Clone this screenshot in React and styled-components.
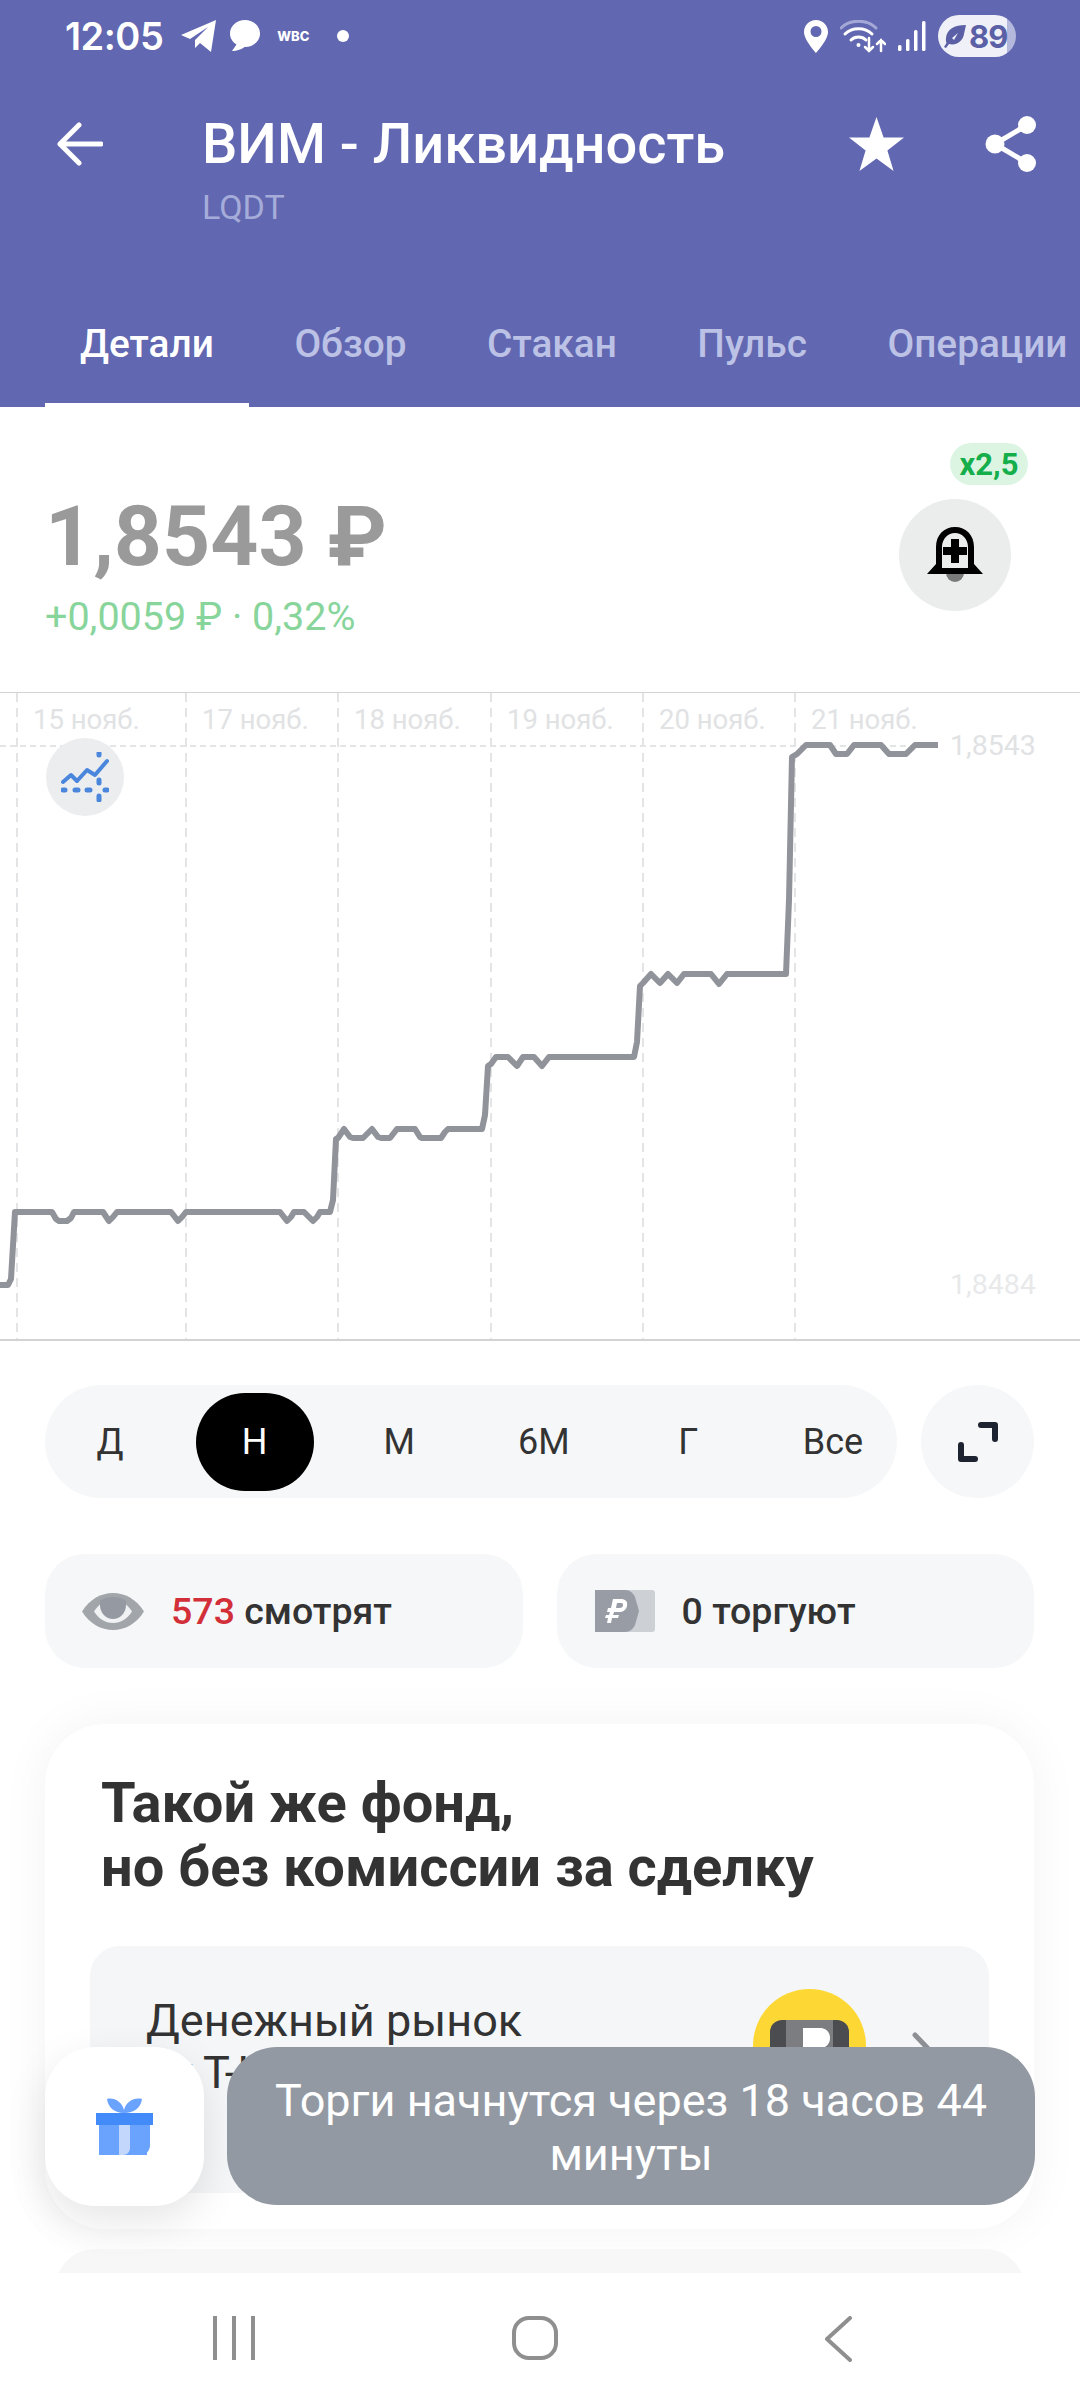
import React from 'react';
import styled, { createGlobalStyle } from 'styled-components';

const GlobalStyle = createGlobalStyle`
  html, body {
    margin: 0;
    padding: 0;
    background: #fff;
  }
  * {
    box-sizing: border-box;
  }
`;

const Page = styled.div`
  position: relative;
  width: 1080px;
  height: 2408px;
  overflow: hidden;
  background: #fff;
  font-family: Roboto, 'Noto Sans', sans-serif;
`;

// HEADER
const Header = styled.header`
  height: 407px;
  background: #6167b0;
  color: #fff;
`;

const StatusBar = styled.div`
  height: 72px;
  display: flex;
  align-items: center;
  padding: 0 64px 0 65px;
`;

const Time = styled.span`
  font-family: Inter, Roboto, sans-serif;
  font-size: 38px;
  font-weight: 600;
  letter-spacing: -0.5px;
  margin-right: 18px;
`;

const Wbc = styled.span`
  font-family: Inter, Roboto, sans-serif;
  font-size: 13px;
  font-weight: 800;
  margin: 0 28px 0 17px;
`;

const StatusRight = styled.div`
  margin-left: auto;
  display: flex;
  align-items: center;
  gap: 12px;
`;

const Battery = styled.div`
  width: 78px;
  height: 42px;
  border-radius: 21px;
  background: linear-gradient(90deg, #f0f1f8 88%, #b4b8dc 88%);
  display: flex;
  align-items: center;
  padding-left: 6px;
  gap: 3px;
  color: #5a5fa6;
  font-family: Inter, Roboto, sans-serif;
  font-size: 31px;
  font-weight: 700;
  letter-spacing: -1px;
`;

const TitleRow = styled.div`
  height: 207px;
  display: flex;
  align-items: flex-start;
  padding: 40px 43px 0 57px;
`;

const IconSlot = styled.div`
  height: 64px;
  display: flex;
  align-items: center;
  margin-left: ${(p) => p.$gap || 0}px;
`;

const TitleBlock = styled.div`
  margin-left: 99px;
  margin-right: auto;
`;

const Title = styled.h1`
  margin: 0;
  font-size: 56px;
  line-height: 64px;
  font-weight: 500;
  white-space: nowrap;
`;

const Ticker = styled.div`
  margin-top: 11px;
  font-size: 34px;
  line-height: 40px;
  color: #a6acd9;
`;

const Tabs = styled.nav`
  height: 128px;
  display: flex;
  gap: 10.5px;
  padding-left: 45px;
  overflow: hidden;
`;

const Tab = styled.div`
  flex: none;
  display: flex;
  align-items: center;
  padding: 4px 35px 0;
  font-size: 38.8px;
  font-weight: 500;
  white-space: nowrap;
  color: ${(p) => (p.$active ? '#fff' : '#bcc1e6')};
  border-bottom: 4px solid ${(p) => (p.$active ? '#fff' : 'transparent')};
`;

// QUOTE
const Quote = styled.section`
  height: 285px;
  display: flex;
  justify-content: space-between;
  padding: 36px 52px 0 45px;
`;

const QuoteLeft = styled.div`
  padding-top: 46px;
`;

const Price = styled.div`
  font-size: 84px;
  line-height: 96px;
  font-weight: 700;
  color: #9a9a9a;
`;

const Change = styled.div`
  margin-top: 10px;
  font-size: 39.5px;
  line-height: 44px;
  color: #88d59c;
`;

const QuoteRight = styled.div`
  width: 129px;
  display: flex;
  flex-direction: column;
  align-items: flex-start;
  gap: 14px;
`;

const Badge = styled.div`
  align-self: flex-end;
  width: 78px;
  height: 42px;
  border-radius: 21px;
  background: #dcf5e3;
  color: #14ae4a;
  font-size: 31px;
  font-weight: 700;
  display: flex;
  align-items: center;
  justify-content: center;
`;

const RoundButton = styled.div`
  width: ${(p) => p.$size}px;
  height: ${(p) => p.$size}px;
  flex: none;
  border-radius: 50%;
  background: ${(p) => p.$bg};
  display: flex;
  align-items: center;
  justify-content: center;
`;

// CHART
const ChartBox = styled.div`
  position: relative;
  height: 649px;

  svg.plot {
    display: block;
    width: 1080px;
    height: 649px;
  }
`;

const ChartBadge = styled.div`
  position: absolute;
  left: 46px;
  top: 46px;
`;

// PERIODS
const Periods = styled.div`
  display: flex;
  gap: 24px;
  margin: 44px 46px 0 45px;
`;

const PeriodPill = styled.div`
  flex: 1;
  height: 113px;
  border-radius: 57px;
  background: #f6f7f8;
  display: flex;
  align-items: center;
  justify-content: space-between;
  padding: 0 5px 0 6px;
`;

const Period = styled.div`
  width: 118px;
  height: 98px;
  border-radius: 49px;
  display: flex;
  align-items: center;
  justify-content: center;
  font-size: 36px;
  color: ${(p) => (p.$active ? '#fff' : '#333')};
  background: ${(p) => (p.$active ? '#000' : 'transparent')};
`;

// STATS
const Stats = styled.div`
  display: grid;
  grid-template-columns: 1fr 1fr;
  gap: 34px;
  margin: 56px 46px 0 45px;
`;

const Stat = styled.div`
  height: 114px;
  border-radius: 40px;
  background: #f6f7f8;
  display: flex;
  align-items: center;
  gap: ${(p) => p.$gap}px;
  padding-left: ${(p) => p.$left}px;
  font-size: 37.5px;
  font-weight: 500;
  color: #333;
  white-space: nowrap;
`;

const Red = styled.span`
  color: #d22f38;
`;

// FUND CARD
const Card = styled.section`
  margin: 56px 46px 0 45px;
  padding: 47px 45px 36px;
  border-radius: 60px;
  background: #fff;
  box-shadow: 0 0 50px rgba(30, 40, 60, 0.05);
`;

const CardTitle = styled.h2`
  margin: 0 0 47px 11px;
  font-size: 56px;
  line-height: 64px;
  font-weight: 700;
  color: #333;
  white-space: nowrap;
`;

const FundRow = styled.div`
  height: 247px;
  border-radius: 30px;
  background: #f5f6f8;
  display: flex;
  padding: 43px 47px 0 56px;
`;

const FundName = styled.div`
  margin-top: 6px;
  font-size: 45px;
  line-height: 52px;
  color: #333;
  margin-right: auto;
  white-space: nowrap;
`;

const FundLogo = styled.div`
  width: 113px;
  height: 113px;
  border-radius: 50%;
  background: #fdd835;
  display: flex;
  justify-content: center;
  padding-top: 31px;
`;

const PeekCard = styled.div`
  margin: 20px 55px 0;
  height: 120px;
  border-radius: 40px 40px 0 0;
  background: #f7f7f8;
`;

// FLOATING
const GiftButton = styled.div`
  position: absolute;
  left: 45px;
  top: 2047px;
  width: 159px;
  height: 159px;
  border-radius: 50px;
  background: #fff;
  box-shadow: 0 14px 40px rgba(0, 0, 0, 0.1);
  display: flex;
  align-items: center;
  justify-content: center;
`;

const Toast = styled.div`
  position: absolute;
  left: 227px;
  top: 2047px;
  width: 808px;
  height: 158px;
  border-radius: 50px;
  background: #9399a2;
  color: #fff;
  font-size: 45px;
  line-height: 54px;
  text-align: center;
  padding: 27px 40px 0;
`;

const BottomNav = styled.div`
  position: absolute;
  left: 0;
  right: 0;
  bottom: 0;
  height: 135px;
  background: #fff;
  display: flex;
  align-items: flex-start;
  justify-content: space-between;
  padding: 43px 228px 0 213px;
`;

const HomeSlot = styled.div`
  margin-right: 9px;
`;

const dayLines = [17, 186, 338, 491, 643, 795];
const dayLabels = [
  [33, '15 нояб.'],
  [202, '17 нояб.'],
  [354, '18 нояб.'],
  [507, '19 нояб.'],
  [659, '20 нояб.'],
  [811, '21 нояб.'],
];

const pricePoints = [
  [0, 1285], [8, 1285], [11, 1279], [15, 1212], [52, 1212], [56, 1219], [59, 1221], [67, 1221], [71, 1218],
  [74, 1212], [103, 1212], [109, 1221], [113, 1217], [117, 1212], [171, 1212], [178, 1221], [182, 1217],
  [186, 1212], [280, 1212], [287, 1221], [291, 1217], [294, 1212], [304, 1212], [313, 1221], [317, 1217],
  [320, 1212], [330, 1212], [333, 1200], [336, 1139], [338, 1138], [344, 1129], [350, 1137], [353, 1138],
  [363, 1138], [372, 1129], [378, 1137], [381, 1138], [390, 1138], [397, 1129], [415, 1129], [420, 1137],
  [422, 1138], [441, 1138], [445, 1132], [448, 1129], [482, 1129], [485, 1115], [488, 1066], [491, 1064],
  [496, 1057], [508, 1057], [517, 1066], [523, 1057], [534, 1057], [542, 1066], [549, 1057], [634, 1057],
  [637, 1042], [640, 986], [643, 983], [651, 974], [660, 983], [668, 974], [677, 983], [684, 974],
  [711, 974], [719, 984], [727, 974], [786, 974], [789, 900], [792, 757], [797, 754], [806, 745], [830, 745],
  [836, 754], [847, 754], [854, 745], [881, 745], [889, 754], [906, 754], [915, 745], [938, 745],
];

const PriceChart = () => (
  <svg className="plot" viewBox="0 692 1080 649">
    <line x1="0" x2="1080" y1="692" y2="692" stroke="#d2d3d4" strokeWidth="2" />
    <line x1="0" x2="1080" y1="1340" y2="1340" stroke="#d2d3d4" strokeWidth="2" />
    {dayLines.map((x) => (
      <line key={x} x1={x} x2={x} y1="693" y2="1339" stroke="#e3e4e6" strokeWidth="2" strokeDasharray="9 6" />
    ))}
    <line x1="0" x2="940" y1="746" y2="746" stroke="#e3e4e6" strokeWidth="2" strokeDasharray="6 4" />
    {dayLabels.map(([x, label]) => (
      <text key={x} x={x} y="729" fontSize="27.5" fill="#e1e2e4" fontFamily="Roboto, sans-serif">
        {label}
      </text>
    ))}
    <text x="950" y="755" fontSize="28.5" fill="#e1e2e4" fontFamily="Roboto, sans-serif">1,8543</text>
    <text x="950" y="1294" fontSize="28.5" fill="#e8e9ea" fontFamily="Roboto, sans-serif">1,8484</text>
    <polyline
      points={pricePoints.map((p) => p.join(',')).join(' ')}
      fill="none"
      stroke="#909399"
      strokeWidth="6"
      strokeLinejoin="round"
    />
  </svg>
);

const TelegramIcon = () => (
  <svg width="36" height="32" viewBox="0 0 36 32" style={{ marginRight: 13 }}>
    <path d="M0 15 L35 0 L30 32 L19 23 L14 28 L14 20 L27 7 L9 19 Z" fill="#fff" />
  </svg>
);

const BubbleIcon = () => (
  <svg width="30" height="32" viewBox="0 0 30 32">
    <path d="M15 0C6.7 0 0 6 0 13.5 0 18.300 2.600 22 6.500 24.500L2 31 C7 31 12 29 14.500 27 L15 27C23.300 27 30 21 30 13.500 30 6 23.300 0 15 0Z" fill="#fff" />
  </svg>
);

const NotifyDot = styled.span`
  width: 12px;
  height: 12px;
  border-radius: 50%;
  background: #fff;
`;

const PinIcon = () => (
  <svg width="24" height="33" viewBox="0 0 24 33">
    <path fillRule="evenodd" d="M12 0C5.400 0 0 5.300 0 12c0 8 12 21 12 21s12-13 12-21C24 5.300 18.600 0 12 0Zm0 17a5.500 5.500 0 1 1 0-11 5.500 5.500 0 0 1 0 11Z" fill="#fff" />
  </svg>
);

const WifiIcon = () => (
  <svg width="46" height="33" viewBox="0 0 46 33" fill="none" stroke="#fff" strokeLinecap="round">
    <path d="M1 8C10 -1 27 -1 36 8" stroke="#a4a8d6" strokeWidth="3" />
    <path d="M5 14C12 7 25 7 32 14" strokeWidth="3" />
    <path d="M11 20C15 16 22 16 26 20" strokeWidth="3" />
    <circle cx="18.500" cy="25" r="2" fill="#fff" stroke="none" />
    <path d="M29 18V31M25 27L29 31L33 27" strokeWidth="2.500" />
    <path d="M41 31V20M37 24L41 20L45 24" strokeWidth="2.500" />
  </svg>
);

const SignalIcon = () => (
  <svg width="28" height="30" viewBox="0 0 28 30" fill="#fff">
    <rect x="0" y="24" width="3.500" height="6" rx="1.500" />
    <rect x="8" y="18" width="3.500" height="12" rx="1.500" />
    <rect x="16" y="9" width="3.500" height="21" rx="1.500" />
    <rect x="24" y="0" width="3.500" height="30" rx="1.500" />
  </svg>
);

const LeafIcon = () => (
  <svg width="22" height="24" viewBox="0 0 22 24">
    <path d="M22 1C10 1 3 5 2 14c-.3 2 0 4 .5 5L0 23l2 1 3-4c7 2 14-3 15-10 .5-3 1.500-6 2-9Zm-14 13 6-5-4 7Z" fill="#5a5fa6" />
  </svg>
);

const BackIcon = () => (
  <svg width="46" height="44" viewBox="0 0 46 44" fill="none" stroke="#fff" strokeWidth="5" strokeLinecap="round" strokeLinejoin="round">
    <path d="M44 22H3M22 3L3 22L22 41" />
  </svg>
);

const StarIcon = () => (
  <svg width="55" height="54" viewBox="0 0 58 54" preserveAspectRatio="none">
    <path d="M29 0L36.500 20.500H58L40.500 33.500L47 54L29 41.500L11 54L17.500 33.500L0 20.500H21.500Z" fill="#fff" />
  </svg>
);

const ShareIcon = () => (
  <svg width="52" height="56" viewBox="0 0 52 56" fill="#fff" stroke="#fff">
    <line x1="10" y1="28" x2="42" y2="9" strokeWidth="5" />
    <line x1="10" y1="28" x2="42" y2="47" strokeWidth="5" />
    <circle cx="10" cy="28" r="9.500" stroke="none" />
    <circle cx="42" cy="9" r="9" stroke="none" />
    <circle cx="42" cy="47" r="9" stroke="none" />
  </svg>
);

const BellIcon = () => (
  <svg width="56" height="56" viewBox="0 0 56 56">
    <path d="M19 46h18a9 9 0 0 1-18 0Z" fill="#7a7a7a" />
    <path fillRule="evenodd" d="M0 47L9 37V20C9 8 17 0 28 0S47 8 47 20V37L56 47ZM15 41H41V20C41 12 35 6 28 6S15 12 15 20Z" fill="#000" />
    <path d="M24 12h8v8h8v8h-8v8h-8v-8h-8v-8h8Z" fill="#000" />
  </svg>
);

const TrendIcon = () => (
  <svg width="48" height="50" viewBox="0 0 48 50" fill="none" stroke="#4a86dc" strokeLinecap="round" strokeLinejoin="round">
    <path d="M2 30L10 23L16 29L26 18L34 23L46 9" strokeWidth="4" />
    <path d="M38 1V3M38 28V31M38 44V48M2 38H4M14 38H17M26 38H29M44 38H46" strokeWidth="5" />
  </svg>
);

const ExpandIcon = () => (
  <svg width="40" height="40" viewBox="0 0 40 40" fill="none" stroke="#1d2330" strokeWidth="6" strokeLinecap="round" strokeLinejoin="round">
    <path d="M23 3H37V17M3 23V37H17" />
  </svg>
);

const EyeIcon = () => (
  <svg width="62" height="37" viewBox="0 0 62 37">
    <path d="M0 18.500C8 6 19 0 31 0S54 6 62 18.500C54 31 43 37 31 37S8 31 0 18.500Z" fill="#a2a6ab" />
    <path d="M12 18.500C17 11 23 7 31 7S45 11 50 18.500C45 26 39 30 31 30S17 26 12 18.500Z" fill="#f1f2f3" />
    <path d="M18 7.500C22 5 26 4 31 4S40 5 44 7.500V12C44 20 38 26 31 26S18 20 18 12Z" fill="#959aa2" />
  </svg>
);

const RubleCardIcon = () => (
  <svg width="60" height="42" viewBox="0 0 60 42">
    <rect x="22" y="0" width="38" height="42" rx="3" fill="#cdd0d5" />
    <path d="M0 0H30C35 0 38 3 40 7L44 21L40 35C38 39 35 42 30 42H0Z" fill="#989ca5" />
    <path d="M18 9h8c4 0 7 2 6 7-1 4-4 6-8 6h-5l-1 3h6l-1 3h-6l-1 5h-4l1-5h-3l1-3h3l1-3h-3l1-4h3Zm4 4-1 5h3c3 0 4-1 4-3s-1-2-3-2Z" fill="#fff" />
  </svg>
);

const FundLogoIcon = () => (
  <svg width="79" height="60" viewBox="0 0 79 60">
    <rect x="0" y="0" width="79" height="60" rx="12" fill="#4a4c4f" />
    <rect x="16" y="0" width="47" height="60" fill="#7b7d80" />
    <path d="M33 8H50C56 8 60 12 60 18S56 28 50 28H40V31H46V36H40V44H33Z" fill="#fff" />
  </svg>
);

const Chevron = () => (
  <svg width="30" height="56" viewBox="0 0 30 56" fill="none" stroke="#8c8f94" strokeWidth="5" strokeLinecap="round" style={{ marginLeft: 46, marginTop: 43 }}>
    <path d="M3 3L27 28L3 53" />
  </svg>
);

const GiftIcon = () => (
  <svg width="57" height="57" viewBox="0 0 57 57">
    <path d="M27 15C20 15 12 10 11 1C18 -1 26 4 28 12C30 4 38 -1 46 1C45 10 37 15 29 15Z" fill="#6aa3fd" />
    <rect x="3" y="15" width="48" height="42" fill="#6aa3fd" />
    <path d="M26 26H54V47C54 53 50 57 44 57H26Z" fill="#6aa3fd" />
    <path d="M23 26H34V50C34 54 31 57 27 57H23Z" fill="#c2d7fb" />
    <rect x="0" y="15" width="57" height="12" fill="#448bfa" />
  </svg>
);

const NavLines = () => (
  <svg width="42" height="44" viewBox="0 0 42 44" stroke="#8f8f8f" strokeWidth="4">
    <path d="M2 0V44M21 0V44M40 0V44" />
  </svg>
);

const NavHome = () => (
  <svg width="46" height="44" viewBox="0 0 46 44" fill="none" stroke="#8f8f8f" strokeWidth="4">
    <rect x="2" y="2" width="42" height="40" rx="15" />
  </svg>
);

const NavBack = () => (
  <svg width="28" height="46" viewBox="0 0 28 46" fill="none" stroke="#8f8f8f" strokeWidth="4" strokeLinecap="round" strokeLinejoin="round">
    <path d="M26 2L3 23L26 44" />
  </svg>
);

const tabs = ['Детали', 'Обзор', 'Стакан', 'Пульс', 'Операции'];
const periods = ['Д', 'Н', 'М', '6М', 'Г', 'Все'];

const App = () => {
  return (
    <Page>
      <GlobalStyle />
      <Header>
        <StatusBar>
          <Time>12:05</Time>
          <TelegramIcon />
          <BubbleIcon />
          <Wbc>WBC</Wbc>
          <NotifyDot />
          <StatusRight>
            <PinIcon />
            <WifiIcon />
            <SignalIcon />
            <Battery>
              <LeafIcon />
              89
            </Battery>
          </StatusRight>
        </StatusBar>
        <TitleRow>
          <IconSlot>
            <BackIcon />
          </IconSlot>
          <TitleBlock>
            <Title>ВИМ - Ликвидность</Title>
            <Ticker>LQDT</Ticker>
          </TitleBlock>
          <IconSlot>
            <StarIcon />
          </IconSlot>
          <IconSlot $gap={81}>
            <ShareIcon />
          </IconSlot>
        </TitleRow>
        <Tabs>
          {tabs.map((tab, i) => (
            <Tab key={tab} $active={i === 0}>
              {tab}
            </Tab>
          ))}
        </Tabs>
      </Header>

      <Quote>
        <QuoteLeft>
          <Price>1,8543 ₽</Price>
          <Change>+0,0059 ₽ · 0,32%</Change>
        </QuoteLeft>
        <QuoteRight>
          <Badge>x2,5</Badge>
          <RoundButton $size={112} $bg="#ebeded">
            <BellIcon />
          </RoundButton>
        </QuoteRight>
      </Quote>

      <ChartBox>
        <PriceChart />
        <ChartBadge>
          <RoundButton $size={78} $bg="#ebedef">
            <TrendIcon />
          </RoundButton>
        </ChartBadge>
      </ChartBox>

      <Periods>
        <PeriodPill>
          {periods.map((period) => (
            <Period key={period} $active={period === 'Н'}>
              {period}
            </Period>
          ))}
        </PeriodPill>
        <RoundButton $size={113} $bg="#f6f7f8">
          <ExpandIcon />
        </RoundButton>
      </Periods>

      <Stats>
        <Stat $left={37} $gap={27}>
          <EyeIcon />
          <span>
            <Red>573</Red> смотрят
          </span>
        </Stat>
        <Stat $left={38} $gap={27}>
          <RubleCardIcon />
          <span>0 торгуют</span>
        </Stat>
      </Stats>

      <Card>
        <CardTitle>
          Такой же фонд,
          <br />
          но без комиссии за сделку
        </CardTitle>
        <FundRow>
          <FundName>
            Денежный рынок
            <br />
            от Т-Капитал
          </FundName>
          <FundLogo>
            <FundLogoIcon />
          </FundLogo>
          <Chevron />
        </FundRow>
      </Card>
      <PeekCard />

      <GiftButton>
        <GiftIcon />
      </GiftButton>
      <Toast>Торги начнутся через 18 часов 44 минуты</Toast>

      <BottomNav>
        <NavLines />
        <HomeSlot>
          <NavHome />
        </HomeSlot>
        <NavBack />
      </BottomNav>
    </Page>
  );
};

export default App;
